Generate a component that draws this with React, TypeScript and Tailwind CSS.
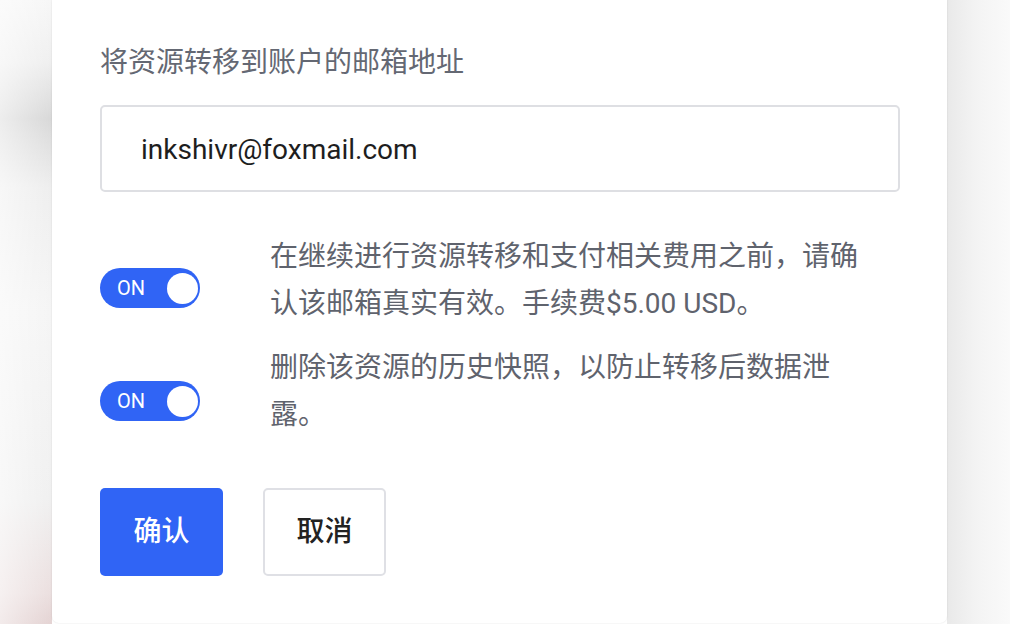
import React from "react";

function Toggle({ className = "" }: { className?: string }) {
  return (
    <div
      className={`flex h-[40px] w-[100px] shrink-0 items-center justify-between rounded-full bg-[#3064f5] pl-[17px] pr-[2px] ${className}`}
    >
      <span className="text-[20px] leading-none text-white">ON</span>
      <span className="h-[31px] w-[31px] rounded-full bg-white" />
    </div>
  );
}

export default function App() {
  return (
    <div
      className="flex h-[624px] w-[1010px] overflow-hidden"
      style={{ fontFamily: 'Roboto, "Noto Sans CJK SC", sans-serif' }}
    >
      <div className="relative w-[52px] shrink-0 bg-[linear-gradient(180deg,#f7f7f7_0%,#efefef_10%,#d8d8d8_19%,#eeeeee_30%,#f5f5f5_50%,#f0f0f0_80%,#ebdfdf_95%,#e4d3d3_100%)]">
        <div className="absolute inset-0 bg-[linear-gradient(90deg,rgba(255,255,255,0.55)_0%,rgba(255,255,255,0)_100%)]" />
      </div>
      <div className="relative z-10 flex h-[623px] w-[895px] shrink-0 flex-col rounded-b-[7px] bg-white pl-[48px] pt-[43px] shadow-[0_0_2px_rgba(0,0,0,0.12)]">
        <div className="text-[28px] leading-[40px] text-[#646873]">
          将资源转移到账户的邮箱地址
        </div>
        <div className="mt-[22px] flex h-[87px] w-[800px] items-center rounded-[5px] border-2 border-[#dedfe3] pl-[39px] text-[28px] text-[#1e1e1e]">
          <span className="pt-[2px]">inkshivr@foxmail.com</span>
        </div>
        <div className="mt-[41px] flex items-start gap-[70px]">
          <Toggle className="mt-[35px]" />
          <p className="w-[600px] text-[28px] leading-[47px] text-[#5f636d]">
            在继续进行资源转移和支付相关费用之前，请确认该邮箱真实有效。手续费$5.00 USD。
          </p>
        </div>
        <div className="mt-[17px] flex items-start gap-[70px]">
          <Toggle className="mt-[37px]" />
          <p className="w-[600px] text-[28px] leading-[47px] text-[#5f636d]">
            删除该资源的历史快照，以防止转移后数据泄露。
          </p>
        </div>
        <div className="mt-[50px] flex gap-[40px]">
          <button className="flex h-[88px] w-[123px] items-center justify-center rounded-[5px] bg-[#3064f5] text-[28px] font-medium text-white">
            确认
          </button>
          <button className="flex h-[88px] w-[123px] items-center justify-center rounded-[5px] border-2 border-[#dfe0e5] bg-white text-[28px] font-medium text-[#222222]">
            取消
          </button>
        </div>
      </div>
      <div className="flex-1 bg-[linear-gradient(90deg,#e9e9e9_0%,#f3f3f3_45%,#fafafa_100%)]" />
    </div>
  );
}
